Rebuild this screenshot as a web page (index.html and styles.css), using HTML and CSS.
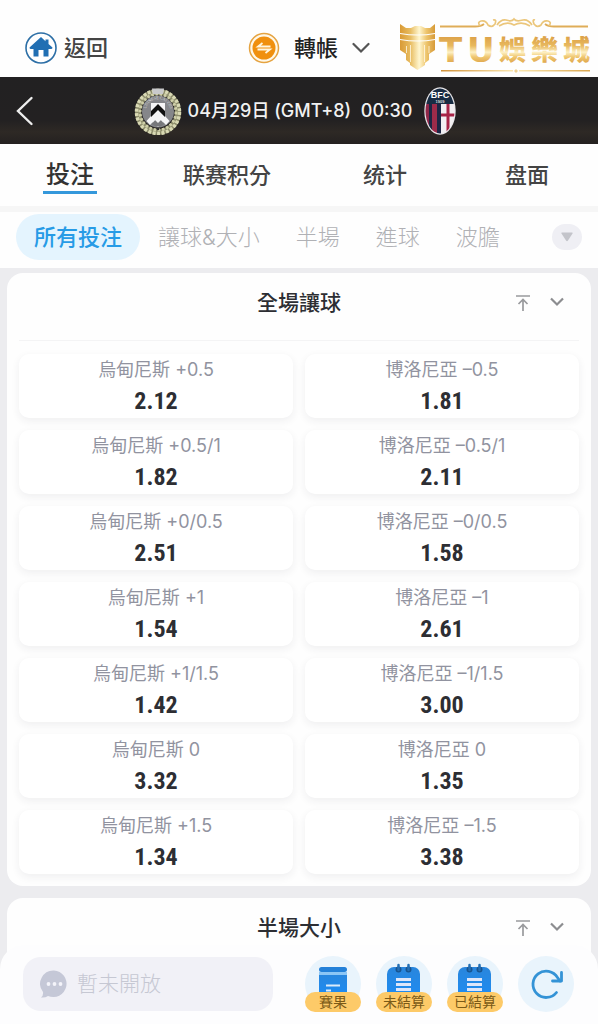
FILE: index.html
```html
<!DOCTYPE html>
<html lang="zh-Hant">
<head>
  <meta charset="UTF-8" />
  <meta name="viewport" content="width=device-width, initial-scale=1.0" />
  <title>TU娛樂城</title>
  <link rel="stylesheet" href="styles.css">
</head>
<body>
  <header class="topbar">
    <a class="back-home" href="#">
      <svg width="32" height="32" viewBox="0 0 32 32" aria-hidden="true">
        <circle cx="16" cy="16" r="15" fill="#fff" stroke="#2d6fa6" stroke-width="1.6"/>
        <path d="M16 5 4.5 15.500Q4.500 17 6 17H8.500V24.500H13.500V18H18.500V24.500H23.500V17H26Q27.500 17 27.500 15.500L23.500 12V7.500H20.500V9.200Z" fill="#216fb3"/>
      </svg>
      返回
    </a>
    <button class="transfer" type="button">
      <svg width="32" height="32" viewBox="0 0 32 32" aria-hidden="true">
        <circle cx="16" cy="16" r="14.500" fill="#fff8e8" stroke="#e5a341" stroke-width="1.500"/>
        <circle cx="16" cy="16" r="11.500" fill="#f0900f"/>
        <path d="M22.500 14.500H10L14.500 11M9.500 17.500H22L17.500 21" fill="none" stroke="#fff6df" stroke-width="1.800"/>
      </svg>
      <span>轉帳</span>
      <svg width="18" height="12" viewBox="0 0 18 12" aria-hidden="true">
        <path d="M1.500 2 9 9.500 16.500 2" fill="none" stroke="#555" stroke-width="2.200" stroke-linecap="round"/>
      </svg>
    </button>
    <svg class="brand" width="196" height="60" viewBox="0 0 196 60" role="img" aria-label="TU娛樂城">
      <defs>
        <linearGradient id="gold" x1="0" y1="20" x2="0" y2="48" gradientUnits="userSpaceOnUse">
          <stop offset="0" stop-color="#dca047"/>
          <stop offset=".35" stop-color="#e8b95f"/>
          <stop offset=".58" stop-color="#fdf0c4"/>
          <stop offset=".75" stop-color="#efc66f"/>
          <stop offset="1" stop-color="#dda146"/>
        </linearGradient>
        <linearGradient id="shield" x1="2" y1="0" x2="37" y2="0" gradientUnits="userSpaceOnUse">
          <stop offset="0" stop-color="#d99a35"/>
          <stop offset=".3" stop-color="#e8bd62"/>
          <stop offset=".55" stop-color="#fff6cf"/>
          <stop offset=".75" stop-color="#eec66f"/>
          <stop offset="1" stop-color="#d79a37"/>
        </linearGradient>
        <linearGradient id="rule" x1="0" y1="0" x2="1" y2="0">
          <stop offset="0" stop-color="#d0923b"/>
          <stop offset=".5" stop-color="#fbe9b4"/>
          <stop offset="1" stop-color="#d9a650"/>
        </linearGradient>
      </defs>
      <path d="M2 8 8 12H13L17 10H23L27 12H32L37 8V17Q20 20 2 17Z" fill="url(#shield)"/>
      <path d="M2 18Q20 21 37 18V23Q20 26 2 23Z" fill="url(#shield)"/>
      <path d="M2 24Q20 27 37 24V34L31 38V44L27 47V49L19.500 54 12 49V47L8 44V38L2 34Z" fill="url(#shield)"/>
      <path d="M8.500 30V37M12.500 29V46M26.500 29V46M31 30V37" stroke="#fff8e4" stroke-width=".8"/>
      <path d="M42 10.500H77Q83 10.500 86 8M190 10.500H156Q150 10.500 147 8" fill="none" stroke="#dfad58" stroke-width="1.800"/>
      <path d="M82 10Q79 6 83 5Q88 4 90 9Q94 12 97 8Q99 3 95 4M99 9Q103 3 108 4Q114 6 116 3Q118 6 125 4Q130 3 134 9M137 4Q134 3 136 8Q139 12 143 9Q145 4 150 5Q154 6 151 10M101 10Q109 5 116 9Q124 5 132 10" fill="none" stroke="#ebc67b" stroke-width="1.700"/>
      <path d="M43 54H115V55.500H43ZM121 54H192V55.500H121Z" fill="url(#rule)"/>
      <path d="M118 53 120 55 118 57 116 55Z" fill="#efd192"/>
      <text class="brand-latin" x="41 69" y="46" fill="url(#gold)">TU</text>
      <text class="brand-cjk" x="101 133 165" y="44" fill="url(#gold)">娛樂城</text>
    </svg>
  </header>

  <section class="match">
    <button class="match-back" type="button" aria-label="返回">
      <svg width="18" height="30" viewBox="0 0 18 30" aria-hidden="true">
        <path d="M15.500 2 2 15 15.500 28" fill="none" stroke="#eee" stroke-width="2.400" stroke-linecap="round"/>
      </svg>
    </button>
    <div class="match-info">
      <svg width="48" height="48" viewBox="0 0 48 48" aria-hidden="true">
        <circle cx="24" cy="25" r="20" fill="none" stroke="#8d8d6c" stroke-width="6"/>
        <circle cx="24" cy="25" r="21.500" fill="none" stroke="#d9d9b4" stroke-width="3.500" stroke-dasharray="3 1.500"/>
        <circle cx="24" cy="25" r="18" fill="none" stroke="#cfcfa8" stroke-width="3" stroke-dasharray="2.500 1.800"/>
        <circle cx="24" cy="24.500" r="16" fill="#85868a"/>
        <path d="M18 1.500H30L29 7H19Z" fill="#c9cacc"/>
        <path id="crest-arc" d="M12.600 29A12.300 12.300 0 1 1 35.400 29" fill="none"/>
        <text class="crest-name" fill="#d8d8d8"><textPath href="#crest-arc" startOffset="50%">UDINESE CALCIO</textPath></text>
        <path d="M17 16H31V30Q31 36 24 40Q17 36 17 30Z" fill="#f5f5f6"/>
        <path d="M17 29 12.500 34 16 38 24 30 32 38 35.500 34 31 29 24 22Z" fill="#f5f5f6"/>
        <path d="M24 30 17.500 37Q24 42 30.500 37Z" fill="#77787b"/>
        <path d="M24 25.500 19 31 24 36 29 31Z" fill="#f5f5f6"/>
        <path d="M17 24 24 17 31 24V30L24 23 17 30Z" fill="#111"/>
        <circle cx="24" cy="42" r="1.300" fill="#333"/>
      </svg>
      <time class="match-time" datetime="04-29T00:30+08:00">04月29日 (GMT+8)&nbsp; 00:30</time>
      <svg class="crest-away" width="32" height="48" viewBox="0 0 32 48" aria-hidden="true">
        <defs><clipPath id="oval"><ellipse cx="16" cy="24" rx="14.500" ry="22.500"/></clipPath></defs>
        <ellipse cx="16" cy="24" rx="15.700" ry="23.700" fill="#e9e7ea"/>
        <g clip-path="url(#oval)">
          <path d="M0 0H32V17H0Z" fill="#182c43"/>
          <path d="M0 17H5V48H0Z" fill="#8f2748"/>
          <path d="M5 17H8V48H5Z" fill="#1d2644"/>
          <path d="M8 17H13V48H8Z" fill="#9d2b4a"/>
          <path d="M13 17H17V48H13Z" fill="#1d2644"/>
          <path d="M17 17H32V48H17Z" fill="#f2eff2"/>
          <path d="M22.500 17H25.500V48H22.500ZM17 26.500H32V29.500H17Z" fill="#a72347"/>
        </g>
        <text class="crest-bfc" x="16" y="11" fill="#fff">BFC</text>
        <text class="crest-year" x="16" y="16" fill="#ddd">1909</text>
      </svg>
    </div>
  </section>

  <nav class="tabs">
    <a class="tab active" href="#">投注</a>
    <a class="tab" href="#">联赛积分</a>
    <a class="tab" href="#">统计</a>
    <a class="tab" href="#">盘面</a>
  </nav>

  <div class="filters">
    <button class="chip active" type="button">所有投注</button>
    <button class="chip" type="button">讓球&amp;大小</button>
    <button class="chip" type="button">半場</button>
    <button class="chip" type="button">進球</button>
    <button class="chip" type="button">波膽</button>
    <button class="more" type="button" aria-label="更多">
      <svg width="12" height="10" viewBox="0 0 12 10" aria-hidden="true"><path d="M1 .5H11Q12 .5 11.500 1.500L7 8.500Q6 9.800 5 8.500L.5 1.500Q0 .5 1 .5Z" fill="#c3c4ca"/></svg>
    </button>
  </div>

  <main class="markets">
    <section class="market">
      <div class="market-head">
        <h2>全場讓球</h2>
        <div class="market-tools">
          <button type="button" aria-label="置頂">
            <svg width="16" height="18" viewBox="0 0 16 18" aria-hidden="true"><path d="M1 2H15M8 17V6M3.500 10 8 5.500 12.500 10" fill="none" stroke="#999a9d" stroke-width="1.700"/></svg>
          </button>
          <button type="button" aria-label="收合">
            <svg width="16" height="18" viewBox="0 0 16 18" aria-hidden="true"><path d="M2 4.500 8 10.500 14 4.500" fill="none" stroke="#8c8d90" stroke-width="2.200"/></svg>
          </button>
        </div>
      </div>
      <div class="odds">
        <button class="odd" type="button"><span>烏甸尼斯 +0.5</span><b>2.12</b></button>
        <button class="odd" type="button"><span>博洛尼亞 –0.5</span><b>1.81</b></button>
        <button class="odd" type="button"><span>烏甸尼斯 +0.5/1</span><b>1.82</b></button>
        <button class="odd" type="button"><span>博洛尼亞 –0.5/1</span><b>2.11</b></button>
        <button class="odd" type="button"><span>烏甸尼斯 +0/0.5</span><b>2.51</b></button>
        <button class="odd" type="button"><span>博洛尼亞 –0/0.5</span><b>1.58</b></button>
        <button class="odd" type="button"><span>烏甸尼斯 +1</span><b>1.54</b></button>
        <button class="odd" type="button"><span>博洛尼亞 –1</span><b>2.61</b></button>
        <button class="odd" type="button"><span>烏甸尼斯 +1/1.5</span><b>1.42</b></button>
        <button class="odd" type="button"><span>博洛尼亞 –1/1.5</span><b>3.00</b></button>
        <button class="odd" type="button"><span>烏甸尼斯 0</span><b>3.32</b></button>
        <button class="odd" type="button"><span>博洛尼亞 0</span><b>1.35</b></button>
        <button class="odd" type="button"><span>烏甸尼斯 +1.5</span><b>1.34</b></button>
        <button class="odd" type="button"><span>博洛尼亞 –1.5</span><b>3.38</b></button>
      </div>
    </section>

    <section class="market last">
      <div class="market-head">
        <h2>半場大小</h2>
        <div class="market-tools">
          <button type="button" aria-label="置頂">
            <svg width="16" height="18" viewBox="0 0 16 18" aria-hidden="true"><path d="M1 2H15M8 17V6M3.500 10 8 5.500 12.500 10" fill="none" stroke="#999a9d" stroke-width="1.700"/></svg>
          </button>
          <button type="button" aria-label="收合">
            <svg width="16" height="18" viewBox="0 0 16 18" aria-hidden="true"><path d="M2 4.500 8 10.500 14 4.500" fill="none" stroke="#8c8d90" stroke-width="2.200"/></svg>
          </button>
        </div>
      </div>
    </section>
  </main>

  <footer class="dock">
    <label class="chat">
      <svg width="28" height="28" viewBox="0 0 28 28" aria-hidden="true">
        <path d="M14 .5A13.300 13.300 0 1 1 8 26Q5 28 1 27.500Q3.500 25.500 3 22A13.300 13.300 0 0 1 14 .5Z" fill="#c5c8d7"/>
        <circle cx="8.500" cy="14" r="1.900" fill="#f4f4fa"/><circle cx="14.500" cy="14" r="1.900" fill="#f4f4fa"/><circle cx="20.500" cy="14" r="1.900" fill="#f4f4fa"/>
      </svg>
      <input type="text" placeholder="暫未開放" aria-label="聊天" disabled>
    </label>
    <button class="round" type="button">
      <svg width="56" height="56" viewBox="0 0 56 56" aria-hidden="true">
        <defs><linearGradient id="blue" x1="0" y1="0" x2="0" y2="1"><stop offset="0" stop-color="#2a86dc"/><stop offset="1" stop-color="#1b8cf5"/></linearGradient></defs>
        <rect x="14" y="16" width="28" height="26" fill="url(#blue)"/>
        <rect x="14" y="16" width="28" height="3" fill="#8cc6f5"/>
        <rect x="14" y="11" width="28" height="5" rx="2.500" fill="#2380d8"/>
        <path d="M21 29.500H35M21 34.500H26" stroke="#dcebfa" stroke-width="2.200"/>
      </svg>
      <span class="tag">賽果</span>
    </button>
    <button class="round" type="button">
      <svg width="56" height="56" viewBox="0 0 56 56" aria-hidden="true">
        <rect x="11" y="11" width="33" height="34" rx="7" fill="url(#blue)"/>
        <circle cx="22.500" cy="13.500" r="3" fill="#17538f"/><circle cx="32.500" cy="13.500" r="3" fill="#17538f"/>
        <path d="M22.500 9V14M32.500 9V14" stroke="#236fb5" stroke-width="2.500" stroke-linecap="round"/>
        <path d="M20 23.500H35M20 28.500H35M20 33.500H35" stroke="#dde6fa" stroke-width="3"/>
      </svg>
      <span class="tag">未結算</span>
    </button>
    <button class="round" type="button">
      <svg width="56" height="56" viewBox="0 0 56 56" aria-hidden="true">
        <rect x="11" y="11" width="33" height="34" rx="7" fill="url(#blue)"/>
        <circle cx="22.500" cy="13.500" r="3" fill="#17538f"/><circle cx="32.500" cy="13.500" r="3" fill="#17538f"/>
        <path d="M22.500 9V14M32.500 9V14" stroke="#236fb5" stroke-width="2.500" stroke-linecap="round"/>
        <path d="M20 23.500H35M20 28.500H35M20 33.500H35" stroke="#dde6fa" stroke-width="3"/>
      </svg>
      <span class="tag">已結算</span>
    </button>
    <button class="round" type="button" aria-label="重新整理">
      <svg width="56" height="56" viewBox="0 0 56 56" aria-hidden="true">
        <path d="M38.500 36.500A13.200 13.200 0 1 1 39.500 21.500L42 25" fill="none" stroke="#3493d6" stroke-width="2.800" stroke-linecap="round"/>
        <path d="M43.500 16.500V25H34.500" fill="none" stroke="#3493d6" stroke-width="2.800" stroke-linecap="round" stroke-linejoin="round"/>
      </svg>
    </button>
  </footer>
</body>
</html>
```
FILE: styles.css
```css
* {
  box-sizing: border-box;
}
body {
  margin: 0;
  min-height: 100vh;
  display: flex;
  flex-direction: column;
  font-family: Inter, "Noto Sans CJK TC", sans-serif;
  line-height: 1.2;
  background: #ececef;
  color: #2d2e33;
}
button {
  padding: 0;
  border: 0;
  background: none;
  font: inherit;
  color: inherit;
  cursor: pointer;
}
a {
  color: inherit;
  text-decoration: none;
}
svg {
  display: block;
  flex: none;
}

/* top bar */
.topbar {
  display: flex;
  align-items: center;
  height: 77px;
  padding: 15px 4px 0 25px;
  background: #fefefe;
}
.back-home,
.transfer {
  display: flex;
  align-items: center;
  font-size: 22px;
  padding-top: 4px;
}
.back-home {
  gap: 7px;
  color: #444;
  font-weight: 500;
}
.transfer {
  margin-left: auto;
  margin-right: 28px;
  gap: 14px;
  font-weight: 500;
  color: #222;
}
.brand-latin {
  font: bold 34px "DejaVu Sans", sans-serif;
}
.brand-cjk {
  font: 900 27px "Noto Sans CJK TC", sans-serif;
}

/* match banner */
.match {
  display: grid;
  grid-template-columns: 1fr auto 1fr;
  align-items: center;
  height: 67px;
  padding: 0 24px 0 16px;
  background: linear-gradient(#222122, #232122 65%, #2e2925 82%, #242120);
}
.match-back {
  justify-self: start;
}
.match-info {
  display: flex;
  align-items: center;
  gap: 6px;
}
.match-time {
  font-size: 18px;
  font-weight: 500;
  color: #f1f1f1;
  white-space: nowrap;
}
.crest-away {
  margin-left: 6px;
}
.crest-name {
  font: 4px "Liberation Serif", serif;
  text-anchor: middle;
}
.crest-bfc {
  font: bold 9px "Liberation Sans", sans-serif;
  text-anchor: middle;
}
.crest-year {
  font: bold 4px "Liberation Sans", sans-serif;
  text-anchor: middle;
}

/* tabs */
.tabs {
  display: grid;
  grid-template-columns: 140fr 174fr 142fr 142fr;
  justify-items: center;
  height: 62px;
  padding-top: 10px;
  background: #fefefe;
}
.tab {
  font-family: Inter, "Noto Sans CJK SC", sans-serif;
  font-size: 22px;
  line-height: 42px;
  font-weight: 500;
  color: #444;
}
.tab.active {
  height: 40px;
  padding: 0 3px;
  font-size: 24px;
  color: #333;
  border-bottom: 3px solid #3498db;
}

/* bet filters */
.filters {
  display: flex;
  align-items: center;
  height: 62px;
  padding: 0 16px 6px;
  border-top: 6px solid #f6f6f6;
  background: #fefefe;
}
.chip {
  height: 46px;
  padding: 0 18px;
  border-radius: 23px;
  font-size: 22px;
  font-weight: 300;
  color: #b0b1b5;
  white-space: nowrap;
}
.chip.active {
  background: #e4f4fe;
  color: #279be6;
  font-weight: 500;
}
.more {
  display: grid;
  place-items: center;
  width: 30px;
  height: 26px;
  margin-left: auto;
  border-radius: 13px;
  background: #efeff4;
}

/* markets */
.markets {
  flex: 1;
  display: flex;
  flex-direction: column;
  gap: 12px;
  padding: 5px 7px 0;
}
.market {
  padding: 0 12px 12px;
  border-radius: 16px;
  background: #fefefe;
}
.market.last {
  flex: 1;
  border-radius: 16px 16px 0 0;
}
.market-head {
  display: grid;
  grid-template-columns: 1fr auto 1fr;
  align-items: center;
  height: 68px;
  padding-bottom: 8px;
  border-bottom: 1px solid #f4f4f5;
}
.last .market-head {
  border: 0;
}
.market-head h2 {
  grid-column: 2;
  margin: 0;
  font-size: 21px;
  font-weight: 500;
}
.market-tools {
  justify-self: end;
  display: flex;
  gap: 18px;
  padding-right: 14px;
}
.odds {
  display: grid;
  grid-template-columns: 1fr 1fr;
  gap: 12px;
  padding-top: 13px;
}
.odd {
  display: flex;
  flex-direction: column;
  align-items: center;
  height: 64px;
  border-radius: 10px;
  background: #fff;
  box-shadow: 0 3px 9px rgba(40, 40, 60, .07);
}
.odd span {
  font-size: 18px;
  line-height: 32px;
  font-weight: 400;
  color: #9193a0;
}
.odd b {
  font-family: "Liberation Sans Narrow", "Roboto Condensed", Roboto, sans-serif;
  font-size: 24px;
  line-height: 30px;
  font-weight: 700;
}

/* bottom dock */
.dock {
  position: fixed;
  left: 0;
  right: 0;
  bottom: 0;
  display: flex;
  align-items: center;
  gap: 15px;
  height: 79px;
  padding: 0 24px 2px 23px;
  border-radius: 24px 24px 0 0;
  background: #fdfdfe;
}
.chat {
  flex: 1;
  min-width: 0;
  display: flex;
  align-items: center;
  gap: 9px;
  height: 54px;
  margin-right: 17px;
  padding: 0 17px;
  border-radius: 18px;
  background: #f1f1f7;
}
.chat input {
  flex: 1;
  min-width: 0;
  padding: 0;
  border: 0;
  background: none;
  font: 300 21px Inter, "Noto Sans CJK TC", sans-serif;
}
.chat input::placeholder {
  color: #c6c8d3;
}
.round {
  position: relative;
  flex: none;
  width: 56px;
  height: 56px;
  border-radius: 50%;
  background: #e9f4fc;
}
.tag {
  position: absolute;
  left: 0;
  right: 0;
  bottom: 0;
  border-radius: 10px;
  background: #fdca68;
  color: #7b5a17;
  font-size: 14px;
  line-height: 20px;
}
```
